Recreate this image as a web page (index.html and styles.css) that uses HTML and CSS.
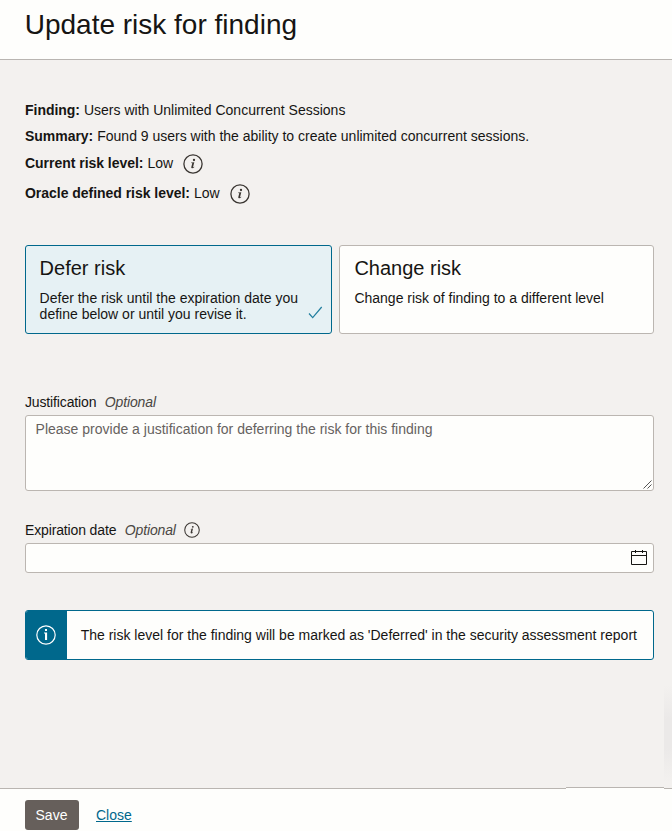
FILE: index.html
```html
<!DOCTYPE html>
<html lang="en">
<head>
<meta charset="utf-8">
<title>Update risk for finding</title>
<link rel="stylesheet" href="styles.css">
</head>
<body>
<svg class="defs" width="0" height="0" aria-hidden="true">
  <symbol id="info" viewBox="0 0 20 20">
    <circle cx="10" cy="10" r="9.1" fill="none" stroke="currentColor" stroke-width="1.3"/>
    <circle cx="11" cy="6" r="1.15" fill="currentColor"/>
    <path d="M8.2 8.6 11.3 8.2 10 13.2 11.2 12.7 11.4 13Q10.3 14.3 9.2 14.3 7.9 14.2 8.3 12.9L9.3 9.2 8.1 9.1Z" fill="currentColor"/>
  </symbol>
</svg>
<header class="header"><h1 class="title">Update risk for finding</h1></header>
<main class="content">
  <section class="details">
    <p class="detail"><b>Finding:</b> <span>Users with Unlimited Concurrent Sessions</span></p>
    <p class="detail"><b>Summary:</b> <span>Found 9 users with the ability to create unlimited concurrent sessions.</span></p>
    <p class="detail detail-tall"><b>Current risk level:</b> <span>Low</span><svg class="info"><use href="#info"/></svg></p>
    <p class="detail detail-tall"><b>Oracle defined risk level:</b> <span>Low</span><svg class="info info-wide"><use href="#info"/></svg></p>
  </section>
  <section class="cards">
    <div class="card selected">
      <h2>Defer risk</h2>
      <p>Defer the risk until the expiration date you<br>define below or until you revise it.</p>
      <svg class="check" viewBox="0 0 15 13"><path d="M1 7.5 4.7 11.7 13.7 1" fill="none" stroke="currentColor" stroke-width="1.2"/></svg>
    </div>
    <div class="card">
      <h2>Change risk</h2>
      <p>Change risk of finding to a different level</p>
    </div>
  </section>
  <div class="label"><span>Justification</span><i>Optional</i></div>
  <div class="box textarea"><span>Please provide a justification for deferring the risk for this finding</span>
    <svg class="grip" viewBox="0 0 9 9"><path d="M.5 8.5 8.5.5M4.5 8.5 8.5 4.5" stroke="#555" stroke-width="1"/></svg>
  </div>
  <div class="label label-date"><span>Expiration date</span><i>Optional</i><svg class="info small"><use href="#info"/></svg></div>
  <div class="box date">
    <svg class="calendar" viewBox="0 0 16 16"><path d="M.5 1.5h15v13H.5zM.5 5.5h15M4.5 0v3M11.5 0v3" fill="none" stroke="#161513"/></svg>
  </div>
  <div class="notice">
    <div class="notice-icon"><svg viewBox="0 0 20 20"><circle cx="10" cy="10" r="9.2" fill="none" stroke="#fff" stroke-width="1.2"/><path d="M9 4h2v2H9zM8 7.4h3.1v7.6H9V8.6H8z" fill="#fff"/></svg></div>
    <p>The risk level for the finding will be marked as 'Deferred' in the security assessment report</p>
  </div>
</main>
<footer class="footer"><span class="save">Save</span><a class="close">Close</a></footer>
</body>
</html>
```
FILE: styles.css
```css
* { box-sizing: border-box; }
body {
  margin: 0;
  height: 831px;
  overflow: hidden;
  display: flex;
  flex-direction: column;
  position: relative;
  background: #f3f1ef;
  color: #161513;
  font: 14px/16px "Liberation Sans", Arial, sans-serif;
}
h1, h2, p { margin: 0; font-weight: 400; }
.defs { position: absolute; }
.header {
  height: 60px;
  flex: none;
  padding: 9px 24.7px 0;
  background: #fefefc;
  border-bottom: 1px solid #b9b5b1;
}
.title { font-size: 28px; line-height: 32px; }
.content { flex: 1; padding: 42px 18px 0 25px; }
.detail { display: flex; align-items: center; height: 16px; margin-bottom: 10px; white-space: nowrap; }
.detail b { margin-right: 4px; letter-spacing: -0.03px; }
.detail-tall { height: 20px; margin-bottom: 10px; }
.detail-tall b, .detail-tall span { padding-bottom: 2px; }
.info { width: 20px; height: 20px; margin-left: 9.5px; color: #3a3632; }
.info-wide { margin-left: 10.5px; }
.cards { display: grid; grid-template-columns: 307px 315px; gap: 7px; margin-top: 41px; }
.card {
  position: relative;
  height: 89px;
  padding: 10px 14.4px;
  border: 1px solid #bbb6b1;
  border-radius: 3px;
  background: #fefefc;
  white-space: nowrap;
}
.selected { padding-left: 13.6px; background: #e6f1f4; border-color: #00688c; }
.card h2 { font-size: 20px; line-height: 24px; margin-bottom: 10px; }
.check { position: absolute; right: 8px; bottom: 14px; width: 15px; height: 13px; color: #227e9e; }
.label { display: flex; align-items: center; height: 16px; margin-top: 60px; margin-bottom: 5px; letter-spacing: -0.14px; }
.label i { margin-left: 8.5px; color: #4a4743; }
.label-date { margin-top: 31px; }
.label .small { width: 16px; height: 16px; margin-left: 8px; }
.box { position: relative; border: 1px solid #bbb6b1; border-radius: 3px; background: #fefefc; }
.textarea { height: 76px; padding: 5px 9.6px; color: #66625f; }
.grip { position: absolute; right: 1px; bottom: 1px; width: 9px; height: 9px; }
.date { height: 30px; display: flex; align-items: center; justify-content: flex-end; padding-right: 6px; }
.calendar { width: 16px; height: 16px; }
.notice {
  display: flex;
  align-items: center;
  height: 50px;
  margin-top: 37px;
  border: 1px solid #00688c;
  border-radius: 3px;
  overflow: hidden;
  background: #fefefc;
  white-space: nowrap;
}
.notice-icon { width: 41px; height: 50px; margin-right: 13.7px; padding-right: 1px; display: flex; align-items: center; justify-content: center; background: #00688c; }
.notice-icon svg { width: 20px; height: 20px; }
.footer {
  flex: none;
  height: 43px;
  display: flex;
  align-items: flex-start;
  padding: 11px 25px 0;
  border-top: 1px solid #b9b5b1;
  background: #fefefc;
}
.footer::before {
  content: "";
  position: absolute;
  left: 566px;
  top: 787px;
  width: 98px;
  height: 2px;
  background: #fefefc;
  border-top: 1px solid #b9b5b1;
}
.content::after {
  content: "";
  position: absolute;
  right: 0;
  top: 685px;
  width: 8px;
  height: 97px;
  background: linear-gradient(#f3f1ef, #ebe9e8 35%, #ebe9e8 65%, #f3f1ef);
}
.save { width: 54px; height: 30px; padding-right: 1px; line-height: 30px; text-align: center; border-radius: 3px; background: #665f5b; color: #fff; }
.close { margin-left: 17px; line-height: 30px; color: #00688c; text-decoration: underline; }
```
